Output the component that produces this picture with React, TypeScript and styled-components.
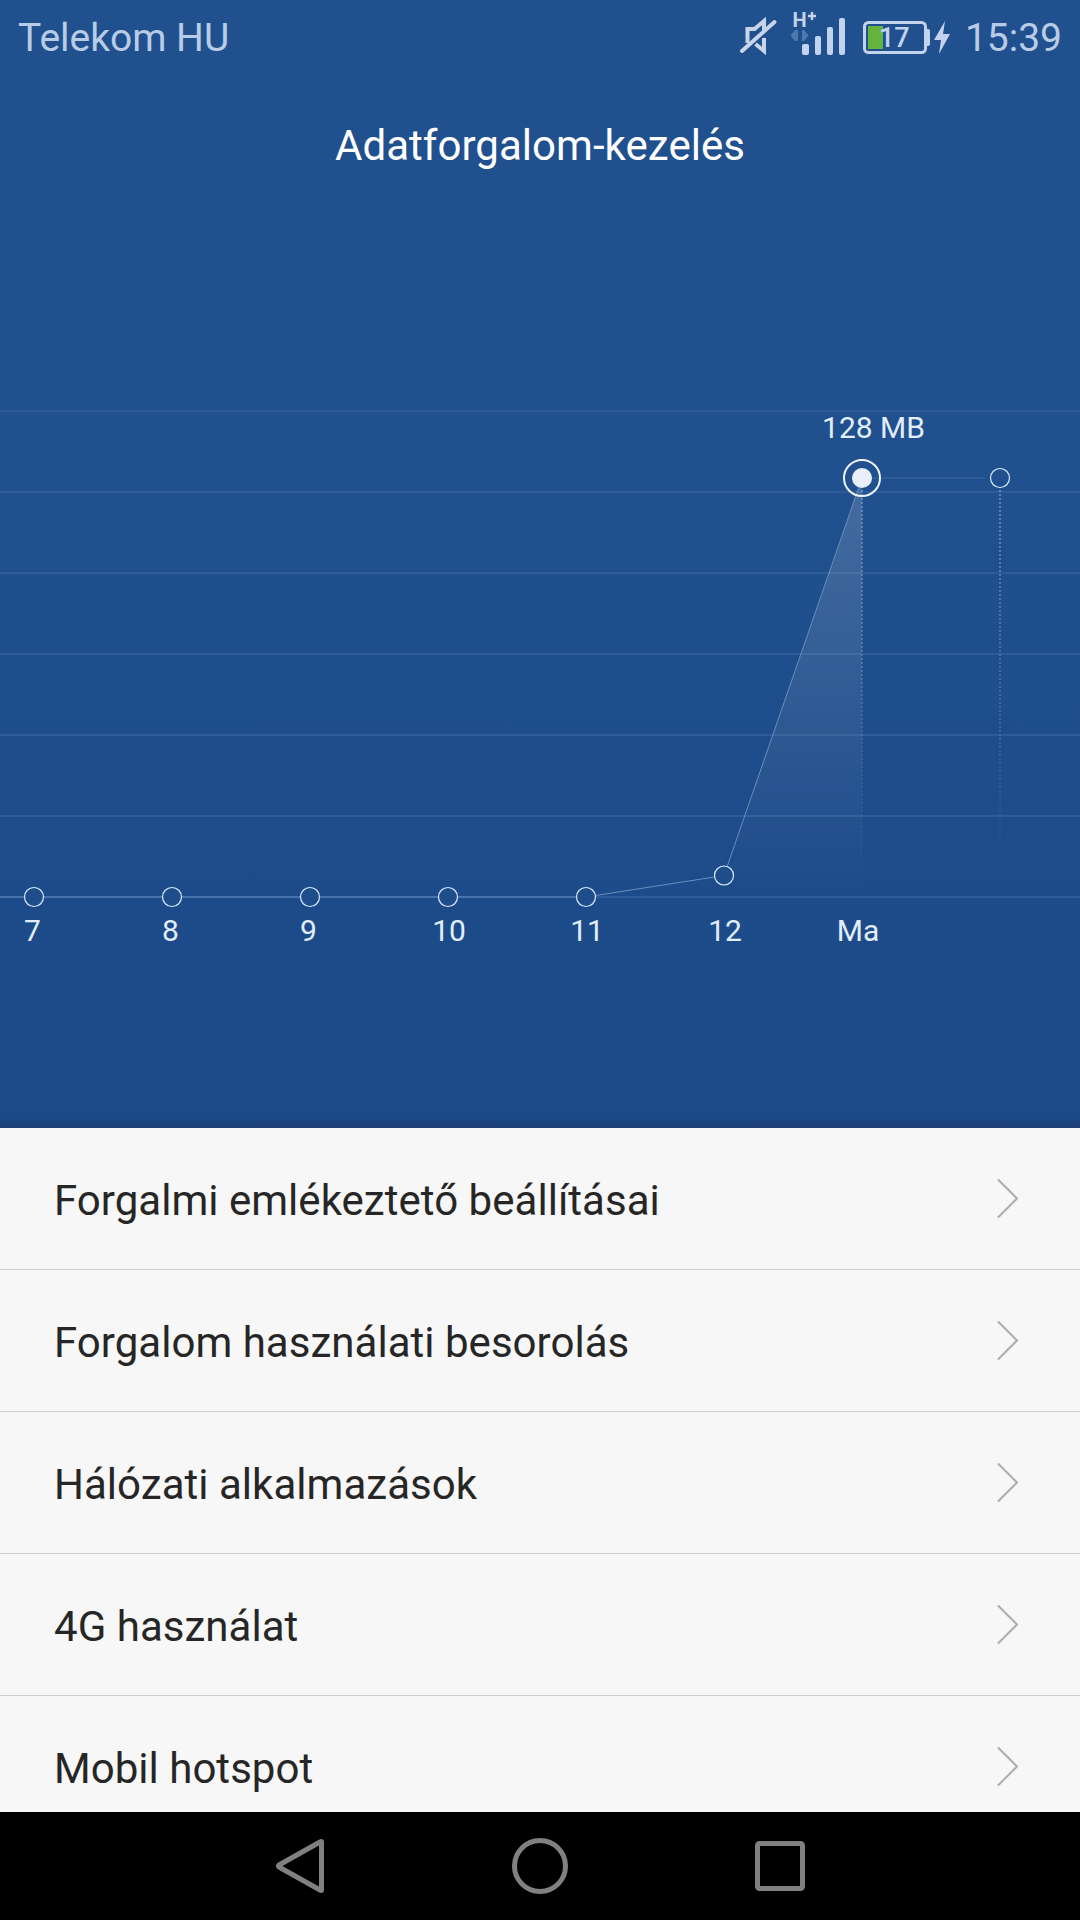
import React from 'react';
import styled, { createGlobalStyle } from 'styled-components';

const Global = createGlobalStyle`
  * { box-sizing: border-box; }
  body { margin: 0; background: #000; font-family: Roboto, 'Noto Sans', sans-serif; }
`;

const Screen = styled.div`
  display: flex;
  flex-direction: column;
  width: 1080px;
  height: 1920px;
  overflow: hidden;
`;

const Hero = styled.section`
  flex: none;
  display: flex;
  flex-direction: column;
  height: 1128px;
  background:
    linear-gradient(to top, rgba(30, 50, 90, 0.45), rgba(30, 50, 90, 0) 10px),
    linear-gradient(#20508e 0%, #20508e 42%, #1c4987 100%);
`;

const StatusBar = styled.header`
  display: flex;
  align-items: center;
  justify-content: space-between;
  height: 76px;
  padding: 0 18px;
  color: #b9cce6;
  font-size: 39px;
  line-height: 76px;
`;

const StatusText = styled.span`
  white-space: nowrap;
`;

const StatusRight = styled.div`
  display: flex;
  align-items: center;
`;

const Title = styled.h1`
  margin: 0;
  height: 140px;
  padding-top: 1px;
  text-align: center;
  font-size: 42px;
  font-weight: 400;
  letter-spacing: 0.04px;
  line-height: 138px;
  color: #fff;
`;

const Chart = styled.svg`
  display: block;
  flex: none;
  margin-top: 144px;
`;

const List = styled.ul`
  flex: 1;
  min-height: 0;
  margin: 0;
  padding: 0;
  overflow: hidden;
  list-style: none;
  background: #f7f7f7;
`;

const Row = styled.li`
  display: flex;
  align-items: center;
  justify-content: space-between;
  height: 142px;
  padding: 0 60px 0 54px;
  border-bottom: 1px solid #cfcfcf;
`;

const RowLabel = styled.span`
  padding-top: 4px;
  font-size: 42px;
  letter-spacing: 0.03px;
  color: #262626;
`;

const NavBar = styled.nav`
  flex: none;
  height: 108px;
  display: flex;
  align-items: center;
  justify-content: center;
  gap: 180px;
  background: #000;
`;

const GRID = [411, 492, 573, 654, 735, 816, 897];
const POINTS = [
  { x: 34, y: 897, label: '7', lx: 32.5 },
  { x: 172, y: 897, label: '8', lx: 170.5 },
  { x: 310, y: 897, label: '9', lx: 308.5 },
  { x: 448, y: 897, label: '10', lx: 449 },
  { x: 586, y: 897, label: '11', lx: 587 },
  { x: 724, y: 875.5, label: '12', lx: 725 },
  { x: 862, y: 478, label: 'Ma', lx: 858 },
];

const StatusIcons = () => (
  <svg width="230" height="76" viewBox="735 0 230 76" fill="none">
    <g stroke="#c8d5e9" strokeWidth="4">
      <path d="M747.500 43V29H754.500L764 21V30M755.500 44L764 51V38" />
      <path d="M742 51L774.500 22" strokeLinecap="round" />
    </g>
    <text x="792.500" y="27" fontSize="20" fontWeight="700" fill="#c3d3ee">H</text>
    <path d="M808 16H816M812 12V20" stroke="#c3d3ee" strokeWidth="2.400" />
    <path d="M798 30V41H795L790.500 35.500L795 30ZM802 30V41H804L808.500 35.500L804 30Z" fill="#5078b0" />
    <g fill="#c3d3ee">
      <rect x="802" y="44" width="7" height="11" rx="2" />
      <rect x="815" y="36" width="6" height="19" rx="2" />
      <rect x="827" y="27" width="6" height="28" rx="2" />
      <rect x="839" y="18" width="6" height="37" rx="2" />
    </g>
    <rect x="864.500" y="22.500" width="61" height="30" rx="4" stroke="#c3d3ee" strokeWidth="3" />
    <path d="M926 29H928Q930 29 930 31V44Q930 46 928 46H926Z" fill="#c3d3ee" />
    <rect x="868" y="26" width="15" height="23" fill="#64b43c" />
    <text x="879" y="47" fontSize="27" fontWeight="500" fill="#c3d3ee">17</text>
    <path d="M945 21L934 40H941L939 54L950 34H943Z" fill="#c3d3ee" />
  </svg>
);

const UsageChart = () => (
  <Chart width="1080" height="600" viewBox="0 360 1080 600" fill="none">
    <defs>
      <linearGradient id="area" gradientUnits="userSpaceOnUse" x1="0" y1="478" x2="0" y2="897">
        <stop offset="0" stopColor="#fff" stopOpacity="0.165" />
        <stop offset="1" stopColor="#fff" stopOpacity="0" />
      </linearGradient>
      <linearGradient id="drop" gradientUnits="userSpaceOnUse" x1="0" y1="488" x2="0" y2="885">
        <stop offset="0" stopColor="#9db9df" stopOpacity="0.5" />
        <stop offset="1" stopColor="#9db9df" stopOpacity="0" />
      </linearGradient>
      <mask id="gaps" maskUnits="userSpaceOnUse" x="0" y="360" width="1080" height="600">
        <rect x="0" y="360" width="1080" height="600" fill="#fff" />
        {POINTS.slice(0, 6).map((p) => <circle key={p.x} cx={p.x} cy={p.y} r="10" fill="#000" />)}
        <circle cx="1000" cy="478" r="10" fill="#000" />
      </mask>
    </defs>
    {GRID.map((y) => <rect key={y} x="0" y={y - 1} width="1080" height="2" fill="#2d5c98" />)}
    <g mask="url(#gaps)">
      <path d="M586 897L724 875.500L862 478V897Z" fill="url(#area)" />
      <path d="M0 897H586" stroke="#4a72aa" strokeWidth="2" />
      <path d="M586 897L724 875.500L862 478" stroke="#6b8dbd" strokeWidth="1" />
      <path d="M862 478H985" stroke="#2d5c98" strokeWidth="2" />
    </g>
    {[862, 1000].map((x) => (
      <path key={x} d={`M${x} 490L${x + 0.01} 890`} stroke="url(#drop)" strokeWidth="2" strokeDasharray="2 2" />
    ))}
    {POINTS.slice(0, 6).map((p) => (
      <circle key={p.x} cx={p.x} cy={p.y} r="9.500" fill="#1e4d8a" stroke="#dcebff" strokeWidth="1.200" />
    ))}
    <circle cx="1000" cy="478" r="9.500" stroke="#dcebff" strokeWidth="1.200" />
    <circle cx="862" cy="478" r="18" stroke="#f0f5fd" strokeWidth="2" />
    <circle cx="862" cy="478" r="10" fill="#e9effa" />
    <g fill="#e2eefc" fontSize="30" textAnchor="middle">
      <text x="873.500" y="438">128 MB</text>
      {POINTS.map((p) => <text key={p.label} x={p.lx} y="941">{p.label}</text>)}
    </g>
  </Chart>
);

const Chevron = () => (
  <svg width="24" height="44" viewBox="0 0 24 44" fill="none" stroke="#acacac" strokeWidth="2">
    <path d="M2 2.500L21 21.500L2 40.500" />
  </svg>
);

const ITEMS = [
  'Forgalmi emlékeztető beállításai',
  'Forgalom használati besorolás',
  'Hálózati alkalmazások',
  '4G használat',
  'Mobil hotspot',
];

export default function App() {
  return (
    <Screen>
      <Global />
      <Hero>
        <StatusBar>
          <StatusText>Telekom HU</StatusText>
          <StatusRight>
            <StatusIcons />
            <StatusText>15:39</StatusText>
          </StatusRight>
        </StatusBar>
        <Title>Adatforgalom-kezelés</Title>
        <UsageChart />
      </Hero>
      <List>
        {ITEMS.map((item) => (
          <Row key={item}>
            <RowLabel>{item}</RowLabel>
            <Chevron />
          </Row>
        ))}
      </List>
      <NavBar>
        <svg width="60" height="60" viewBox="270 1836 60 60" fill="none" stroke="#808080" strokeWidth="5" strokeLinejoin="round">
          <path d="M321.500 1842V1890Q321.500 1891 320 1890L279 1867Q278 1866 279 1865L320 1842Q321.500 1841 321.500 1842Z" />
        </svg>
        <svg width="60" height="60" viewBox="510 1836 60 60" fill="none" stroke="#808080" strokeWidth="5">
          <circle cx="540" cy="1866" r="25.500" />
        </svg>
        <svg width="60" height="60" viewBox="750 1836 60 60" fill="none" stroke="#808080" strokeWidth="5">
          <rect x="757.500" y="1843.500" width="45" height="45" rx="2" />
        </svg>
      </NavBar>
    </Screen>
  );
}
